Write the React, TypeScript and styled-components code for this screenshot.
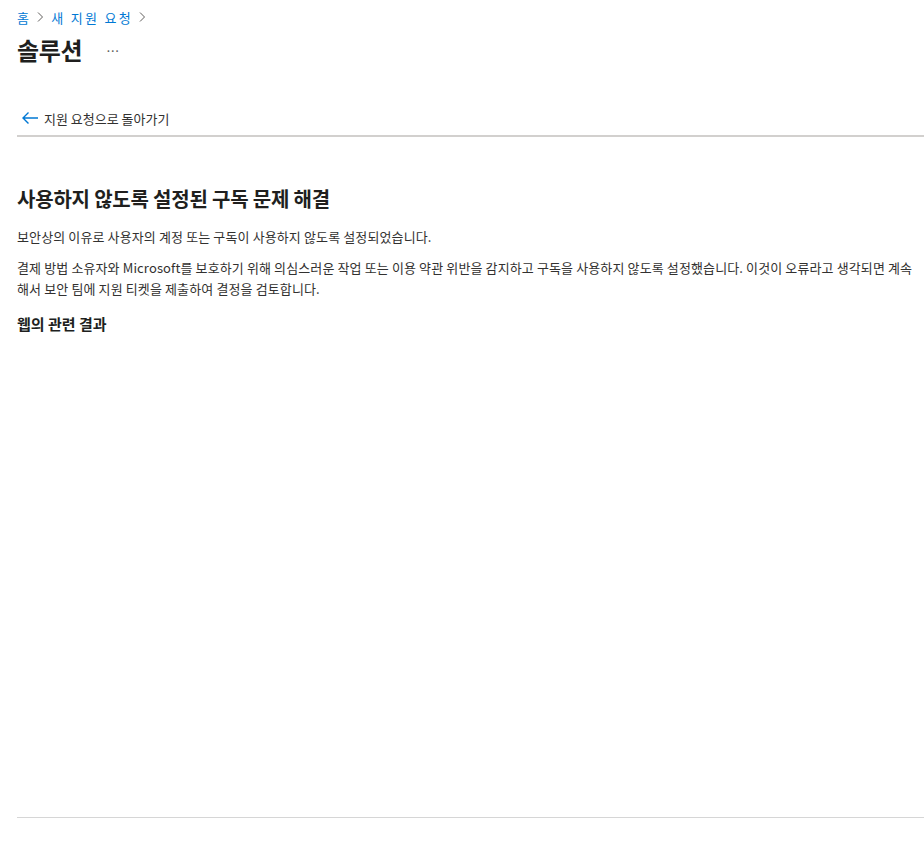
import React from 'react';
import styled, { createGlobalStyle } from 'styled-components';

const GlobalStyle = createGlobalStyle`
  html, body {
    margin: 0;
    padding: 0;
    background: #ffffff;
    overflow: hidden;
  }
  body {
    font-family: "Noto Sans CJK KR", "Noto Sans", sans-serif;
    color: #323130;
  }
`;

const Page = styled.div`
  width: 924px;
  height: 854px;
  padding-left: 17px;
  box-sizing: border-box;
  display: flex;
  flex-direction: column;
`;

const Breadcrumb = styled.nav`
  display: flex;
  align-items: center;
  gap: 7px;
  height: 20px;
  margin-top: 7px;
  font-size: 13px;
  letter-spacing: 2.3px;
  color: #0078d4;
`;

const Crumb = styled.a`
  color: #0078d4;
  text-decoration: none;
  margin-right: -2px;
`;

const Chevron = () => (
  <svg width="8" height="12" viewBox="0 0 8 12" fill="none">
    <path d="M2 1.5 L6.5 6 L2 10.5" stroke="#605e5c" strokeWidth="1" />
  </svg>
);

const TitleRow = styled.div`
  display: flex;
  align-items: center;
  gap: 24px;
  height: 40px;
  margin-top: 2px;
`;

const Title = styled.h1`
  margin: 0;
  font-size: 24px;
  font-weight: 700;
  color: #201f1e;
  letter-spacing: -0.3px;
`;

const More = styled.span`
  font-size: 13px;
  color: #605e5c;
  letter-spacing: 1px;
  padding-top: 2px;
`;

const BackBar = styled.div`
  margin-top: 32px;
  height: 34px;
  display: flex;
  align-items: center;
  gap: 5px;
  padding-left: 4px;
  border-bottom: 2px solid #d2d0ce;
  font-size: 13px;
  color: #323130;
`;

const Content = styled.section`
  flex: 1;
  padding-top: 49px;
`;

const Heading = styled.h2`
  margin: 0 0 14px;
  font-size: 20px;
  font-weight: 700;
  color: #201f1e;
  letter-spacing: -0.2px;
  line-height: 26px;
`;

const Para = styled.p`
  margin: 0 0 10px;
  font-size: 13px;
  line-height: 21px;
  color: #323130;
  letter-spacing: 0.12px;
  padding-right: 10px;
`;

const SubHeading = styled.h3`
  margin: 14px 0 0;
  font-size: 15px;
  font-weight: 700;
  color: #201f1e;
`;

const Footer = styled.div`
  height: 36px;
  border-top: 1px solid #d6d6d6;
`;

export default function App() {
  return (
    <>
      <GlobalStyle />
      <Page>
        <Breadcrumb>
          <Crumb>홈</Crumb>
          <Chevron />
          <Crumb>새 지원 요청</Crumb>
          <Chevron />
        </Breadcrumb>
        <TitleRow>
          <Title>솔루션</Title>
          <More>…</More>
        </TitleRow>
        <BackBar>
          <svg width="18" height="14" viewBox="0 0 18 14" fill="none">
            <path d="M17 7 H2 M7.5 1.5 L2 7 L7.5 12.5" stroke="#0078d4" strokeWidth="1.4" />
          </svg>
          <span>지원 요청으로 돌아가기</span>
        </BackBar>
        <Content>
          <Heading>사용하지 않도록 설정된 구독 문제 해결</Heading>
          <Para>보안상의 이유로 사용자의 계정 또는 구독이 사용하지 않도록 설정되었습니다.</Para>
          <Para>
            결제 방법 소유자와 Microsoft를 보호하기 위해 의심스러운 작업 또는 이용 약관 위반을 감지하고 구독을
            사용하지 않도록 설정했습니다. 이것이 오류라고 생각되면 계속해서 보안 팀에 지원 티켓을 제출하여 결정을
            검토합니다.
          </Para>
          <SubHeading>웹의 관련 결과</SubHeading>
        </Content>
        <Footer />
      </Page>
    </>
  );
}
